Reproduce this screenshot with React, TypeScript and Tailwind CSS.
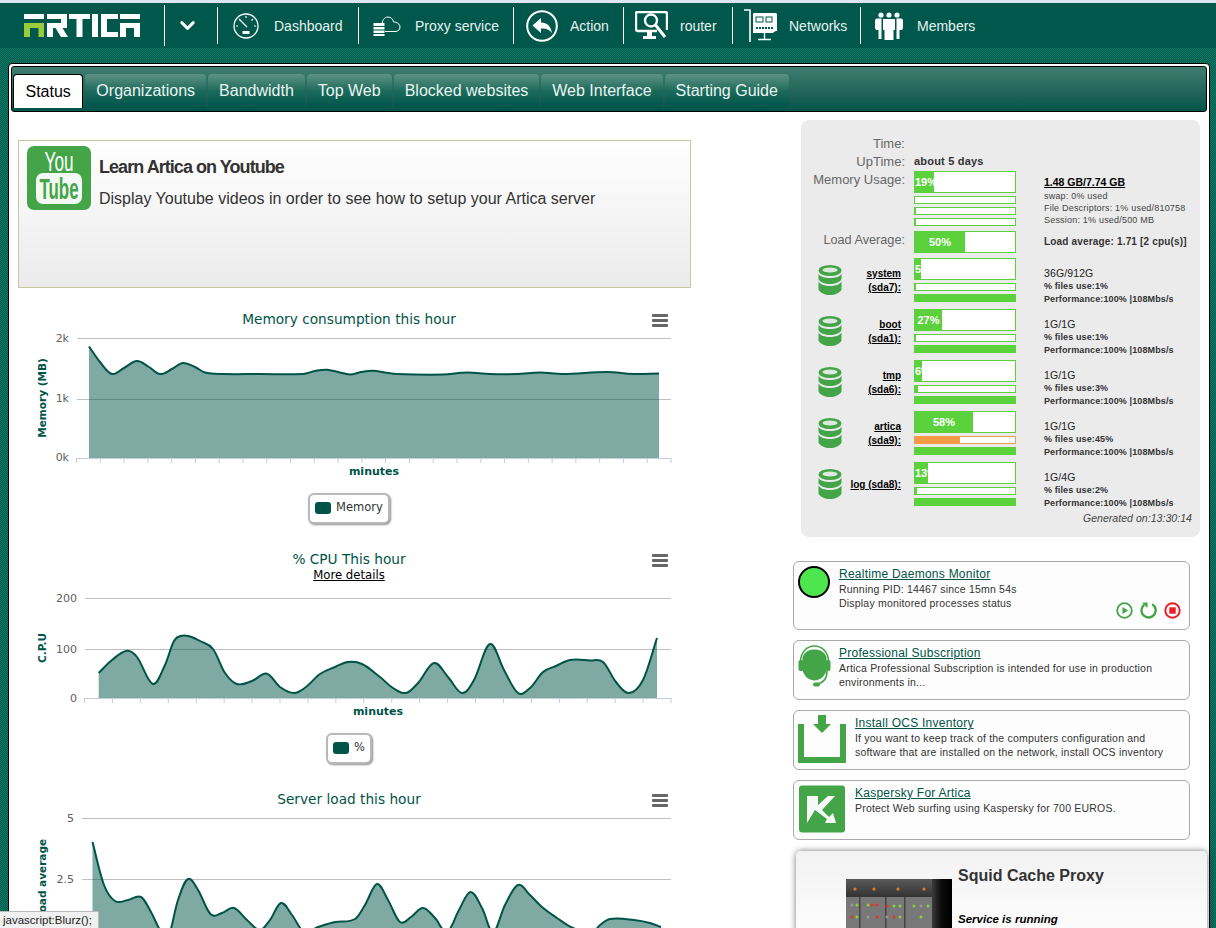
import React from "react";
import { ChevronDown } from "lucide-react";

type P = [number, number];

function spline(pts: P[]): string {
  let d = `M${pts[0][0]} ${pts[0][1]}`;
  for (let i = 0; i < pts.length - 1; i++) {
    const p0 = pts[Math.max(0, i - 1)];
    const p1 = pts[i];
    const p2 = pts[i + 1];
    const p3 = pts[Math.min(pts.length - 1, i + 2)];
    const dx = p2[0] - p1[0];
    const m1 = ((p2[1] - p0[1]) / Math.max(1, p2[0] - p0[0])) * dx * 0.36;
    const m2 = ((p3[1] - p1[1]) / Math.max(1, p3[0] - p1[0])) * dx * 0.36;
    d += ` C${(p1[0] + dx * 0.36).toFixed(1)} ${(p1[1] + m1).toFixed(1)} ${(p2[0] - dx * 0.36).toFixed(1)} ${(p2[1] - m2).toFixed(1)} ${p2[0]} ${p2[1]}`;
  }
  return d;
}

const memPts: P[] = [[89,346.5],[100,362],[112,374],[124,368],[137,361],[149,367],[160,374],[172,369],[183,363],[195,367],[205,372.5],[223,374],[260,374],[303,374],[315,371],[327,369.7],[338,372],[350,374.5],[361,372],[373,370.7],[385,372.5],[397,374],[443,374.5],[467,372.5],[490,374],[517,374],[540,372.5],[563,374],[607,372],[633,374],[659,373.5]];
const cpuPts: P[] = [[98.7,673],[112,660],[127,650.7],[137,657],[153,684],[165,665],[174,641],[182,635.7],[190,636.5],[200,641],[213,649],[225,673],[237,684],[252,681],[267,673.7],[280,687],[294,693],[306,687],[320,674],[335,667],[348,662],[362,664],[380,677],[393,688],[406,693],[418,683],[434,663],[448,677],[462,693],[474,680],[490,644],[504,670],[518,693],[530,688],[543,672],[556,666],[570,660],[590,660.5],[603,662],[616,682],[629,693],[643,680],[657,638]];
const loadPts: P[] = [[92.5,842],[104,885],[115,901],[128,900],[141,897],[151,912],[161,932],[168,938],[178,900],[188,879],[198,890],[210.5,914],[222,913],[234,908],[247,920],[260,930],[270,920],[281,903],[292,915],[304,932],[318,927],[335,922],[355,919],[365,905],[377,884],[388,900],[400,922],[411,917],[423,908],[435,918],[447,932],[459,910],[470.5,892],[482,908],[493,932],[505,905],[518,885],[530,895],[542,907],[557,918],[573,928],[592,933],[600,925],[610,919],[634,920],[650,923],[661,927]];

function Chart({ left, top, height, grids, base, pts, yTitle, yTitleX, yTitleY, labels, ticks, xLabelX, xLabelY }: {
  left: number; top: number; height: number; grids: number[]; base: number; pts: P[]; yTitle: string; yTitleX: number; yTitleY: number;
  labels: [string, number, number][]; ticks?: number[]; xLabelX?: number; xLabelY?: number;
}) {
  const line = spline(pts);
  const area = `${line} L${pts[pts.length - 1][0]} ${base} L${pts[0][0]} ${base} Z`;
  return (
    <svg width={662} height={height} viewBox={`18 ${top} 662 ${height}`} className="block" style={{ fontFamily: "'DejaVu Sans', sans-serif" }}>
      {grids.map((g) => <line key={g} x1={left} x2={671} y1={g + 0.5} y2={g + 0.5} stroke="#c0c0c0" />)}
      {ticks && <line x1={left} x2={671} y1={base + 0.5} y2={base + 0.5} stroke="#c0d0e0" />}
      {ticks && ticks.map((t) => <line key={t} x1={t} x2={t} y1={base} y2={base + 5} stroke="#c0d0e0" />)}
      <path d={area} fill="#005447" fillOpacity={0.5} />
      <path d={line} fill="none" stroke="#005447" strokeWidth={2} />
      {labels.map(([s, x, y]) => <text key={s} x={x} y={y} textAnchor="end" fontSize={11} fill="#606060">{s}</text>)}
      <text transform={`translate(${yTitleX} ${yTitleY}) rotate(-90)`} textAnchor="middle" fontSize={10.5} fontWeight={700} fill="#005447">{yTitle}</text>
      {xLabelX && <text x={xLabelX} y={xLabelY} textAnchor="middle" fontSize={11} fontWeight={700} fill="#005447">minutes</text>}
    </svg>
  );
}

function Burger() {
  return (
    <svg width={18} height={14} viewBox="0 0 18 14" className="absolute right-[11px] top-[4px]">
      <rect x={1} y={0} width={16} height={3} rx={1} fill="#666" />
      <rect x={1} y={5} width={16} height={3} rx={1} fill="#666" />
      <rect x={1} y={10} width={16} height={3} rx={1} fill="#666" />
    </svg>
  );
}

function ChartTitle({ children }: { children: React.ReactNode }) {
  return (
    <div className="relative h-[18px] text-center text-[13.7px] leading-[18px] text-[#005447] font-['DejaVu_Sans',sans-serif]">
      {children}
      <Burger />
    </div>
  );
}

function Legend({ label, w }: { label: string; w: string }) {
  return (
    <div className="flex justify-center h-[31px]">
      <div className={`${w} flex items-center gap-[5px] pl-[5px] pb-px bg-white border-2 border-[#b8b8b8] rounded-[6px] shadow-[1px_1px_2px_rgba(0,0,0,0.45)] text-[11.5px] text-[#333] font-['DejaVu_Sans',sans-serif]`}>
        <span className="w-[16px] h-[12px] rounded-[3px] bg-[#005447]" />
        <span>{label}</span>
      </div>
    </div>
  );
}

function Bar({ pct, h, label, color = "#5bd13c" }: { pct: number; h: string; label?: string; color?: string }) {
  return (
    <div className={`${h} w-[102px] bg-white border overflow-hidden`} style={{ borderColor: color }}>
      <div className="h-full overflow-hidden text-center whitespace-nowrap text-[11px] font-bold leading-[20px] text-white" style={{ width: `${pct}%`, backgroundColor: color }}>
        {label}
      </div>
    </div>
  );
}

function Db() {
  return (
    <svg width={24} height={30} viewBox="0 0 24 30" className="shrink-0">
      <ellipse cx={12} cy={5.5} rx={11.5} ry={5.5} fill="#43a548" />
      <ellipse cx={12} cy={5} rx={7.5} ry={2.5} fill="#dfe8df" />
      <path d="M0.5 8.5C2 12 7 13 12 13S22 12 23.5 8.5V14C22 17.5 17 19 12 19S2 17.5 0.5 14Z" fill="#43a548" />
      <path d="M0.5 16.5C2 19.5 7 21 12 21S22 19.5 23.5 16.5V24.5C22 28 17 30 12 30S2 28 0.5 24.5Z" fill="#43a548" />
    </svg>
  );
}

function Disk({ name, dev, oneLine, pct, label, files, filesPct, size, warn }: { name?: string; dev: string; oneLine?: string; pct: number; label: string; files: string; filesPct: number; size: string; warn?: boolean }) {
  return (
    <div className="flex h-[44px] mb-[7px]">
      <div className="w-[104px] shrink-0 flex items-center pl-[17px]">
        <Db />
        <div className="flex-1 pr-[4px] pt-[2px] text-right text-[10px] font-bold leading-[14px] text-black underline whitespace-nowrap">
          {oneLine ? oneLine : (<><div>{name}</div><div>{dev}</div></>)}
        </div>
      </div>
      <div className="ml-[9px] w-[102px] flex flex-col gap-[3px]">
        <Bar pct={pct} h="h-[22px]" label={label} />
        <Bar pct={filesPct} h="h-[8px]" color={warn ? "#f79c44" : "#5bd13c"} />
        <Bar pct={100} h="h-[8px]" />
      </div>
      <div className="ml-[28px] pt-[8px] text-[9px] text-[#333] font-bold leading-[12px] tracking-[0.12px] whitespace-nowrap">
        <div className="leading-[14px] font-normal text-[10.5px] text-[#222]">{size}</div>
        <div>{files}</div>
        <div className="mt-px">Performance:100% |108Mbs/s</div>
      </div>
    </div>
  );
}

function Card({ h, icon, title, pl, children }: { h: string; icon: React.ReactNode; title: string; pl: string; children: React.ReactNode }) {
  return (
    <div className={`${h} w-[397px] relative flex bg-[#fdfdfd] border border-[#aaaaaa] rounded-[6px] mb-[10px]`}>
      <div className={`${pl} shrink-0 pl-[4px] pt-[4px]`}>{icon}</div>
      <div className="pt-[5px] text-[10.5px] leading-[14px] text-[#333] tracking-[0.2px]">
        <div className="text-[12px] leading-[15px] text-[#005447] underline tracking-[0.25px]">{title}</div>
        {children}
      </div>
    </div>
  );
}

function NavItem({ w, icon, label }: { w: string; icon: React.ReactNode; label: string }) {
  return (
    <div className={`${w} h-full flex items-center relative`}>
      <span className="absolute left-0 top-[4px] bottom-[4px] w-px bg-white" />
      <div className="w-[57px] flex items-center justify-center shrink-0">{icon}</div>
      <span className="mt-[2px] text-[14px] text-[#e8f2ef]">{label}</span>
    </div>
  );
}

function Tab({ label, active }: { label: string; active?: boolean }) {
  return active ? (
    <div className="h-[34px] px-[11.5px] flex items-center bg-white border border-black border-b-0 rounded-t-[4px] text-[16px] text-black">{label}</div>
  ) : (
    <div className="h-[34px] px-[11px] flex items-center rounded-t-[4px] text-[16px] text-[#eaf5f1] bg-gradient-to-b from-[#5c9385] via-[#1a6a5c] to-[#00544a]">{label}</div>
  );
}

export default function App() {
  return (
    <div className="relative w-[1216px] h-[928px] overflow-hidden font-['Liberation_Sans',Arial,sans-serif] bg-[repeating-conic-gradient(#00564a_0_25%,#0a7d67_0_50%)] bg-[length:2px_2px]">
      <div className="h-[3px] bg-[#dbe6f3]" />
      <div className="h-[45px] bg-[#00574b] flex items-center">
        <div className="w-[164px] h-full flex items-center pl-[24px]">
          <svg width={117} height={24} viewBox="0 0 117 24">
            <g fill="#fff">
              <path d="M0 0H20V5H0Z" />
              <path d="M23 0H43V14H38.5L44 23H37L31.5 14H29V23H23V9H37V5H23Z" />
              <path d="M45 0H66V5H58.5V23H52.5V5H45Z" />
              <path d="M68 0H74V23H68Z" />
              <path d="M77 0H94V5H83V18H94V23H77Z" />
              <path d="M96 0H116V5H96Z" />
              <path d="M96 9H116V23H110V14H102V23H96Z" />
            </g>
            <path d="M0 9H20V23H14.5V14H6V23H0Z" fill="#9ccb3b" />
          </svg>
        </div>
        <div className="w-[53px] h-full flex items-center justify-center pr-[7px] relative">
          <span className="absolute left-0 top-[2px] bottom-[2px] w-px bg-white" />
          <ChevronDown size={23} strokeWidth={3} color="#fff" />
        </div>
        <NavItem w="w-[141px]" label="Dashboard" icon={
          <svg width={26} height={26} viewBox="0 0 26 26" fill="none" stroke="#fff">
            <circle cx={13} cy={13} r={12} strokeWidth={1.3} />
            <path d="M13 3V5M6 6L7.5 7.5M20 6L18.5 7.5M3 13H5M23 13H21" strokeWidth={1.2} />
            <path d="M7 7L14 14" strokeWidth={1.3} />
            <rect x={9.5} y={18} width={7} height={3} fill="#fff" stroke="none" />
          </svg>
        } />
        <NavItem w="w-[155px]" label="Proxy service" icon={
          <svg width={28} height={20} viewBox="0 0 28 20" fill="none">
            <path d="M9 9C9 5 11 1 15 1C18 1 20 3 20.5 6C24 6 27 8 27 11C27 14 25 15.5 22 15.5H12" stroke="#fff" strokeWidth={1} />
            <rect x={0.5} y={7} width={11} height={3} fill="#fff" />
            <rect x={0.5} y={11} width={11} height={2.5} fill="#fff" />
            <rect x={0.5} y={14.5} width={11} height={2.5} fill="#fff" />
            <rect x={0.5} y={18} width={11} height={2} fill="#fff" />
          </svg>
        } />
        <NavItem w="w-[110px]" label="Action" icon={
          <svg width={32} height={32} viewBox="0 0 32 32" fill="none">
            <circle cx={16} cy={16} r={14.8} stroke="#fff" strokeWidth={2} />
            <path d="M6.5 15.5L15 8V12.5C21 12.5 25 16.5 26 23C23.5 19.5 20 18 15 18.5V23Z" fill="#fff" />
          </svg>
        } />
        <NavItem w="w-[109px]" label="router" icon={
          <svg width={33} height={30} viewBox="0 0 33 30" fill="none" stroke="#fff">
            <path d="M22 20H3C1.5 20 1 19 1 18V2C1 1 1.5 1 3 1H30C31.5 1 32 1.5 32 3V19" strokeWidth={2.4} />
            <circle cx={16} cy={9.5} r={6} strokeWidth={2.4} />
            <path d="M20.5 14L30 26" strokeWidth={3} />
            <path d="M12 21H17V25H21V28H8V25H12Z" fill="#fff" stroke="none" />
          </svg>
        } />
        <NavItem w="w-[128px]" label="Networks" icon={
          <svg width={33} height={34} viewBox="0 0 33 34">
            <path d="M0 1H6V33" stroke="#fff" strokeWidth={1.6} fill="none" />
            <path d="M9 5C9 4 10 4 11 4H31C32 4 33 4 33 6V22C30 22 30 24 28 24H9Z" fill="#fff" />
            <rect x={12} y={8} width={7} height={5} fill="none" stroke="#00574b" strokeWidth={1} />
            <rect x={22} y={8} width={6} height={5} fill="none" stroke="#00574b" strokeWidth={1} />
            <path d="M12 19H29" stroke="#00574b" strokeWidth={2} strokeDasharray="2 1" />
            <path d="M20.5 24V30M14 30.5H27" stroke="#fff" strokeWidth={1.4} />
          </svg>
        } />
        <NavItem w="w-[356px]" label="Members" icon={
          <svg width={28} height={28} viewBox="0 0 28 28" fill="#fff">
            <circle cx={6} cy={3} r={2.6} />
            <circle cx={14} cy={3} r={2.6} />
            <circle cx={22} cy={3} r={2.6} />
            <path d="M0 9C0 7 1 6.5 3 6.5H6.5V27H3.5V18H1L0 16Z" />
            <path d="M8 7H20V18H18.5V28H9.5V18H8Z" />
            <path d="M28 9C28 7 27 6.5 25 6.5H21.5V27H24.5V18H27L28 16Z" />
          </svg>
        } />
      </div>
      <div className="h-[15px]" />

      <div className="ml-[8px] mr-[6px] h-[900px] bg-white border border-black rounded-t-[4px] pt-[2px] px-px">
        <div className="mx-px h-[46px] border border-black rounded-[3px] bg-gradient-to-b from-[#3f7d70] to-[#00544a] flex items-end gap-[2px] pl-[1px] pb-[3px]">
          <Tab label="Status" active />
          <Tab label="Organizations" />
          <Tab label="Bandwidth" />
          <Tab label="Top Web" />
          <Tab label="Blocked websites" />
          <Tab label="Web Interface" />
          <Tab label="Starting Guide" />
        </div>

        <div className="flex items-start">
          {/* left */}
          <div className="ml-[8px] w-[662px] pt-[28px]">
            <div className="w-[673px] h-[148px] flex border border-[#c8c8a0] bg-gradient-to-b from-white to-[#ebebeb] pl-[8px] pt-[5px]">
              <svg width={64} height={64} viewBox="0 0 64 64" className="shrink-0">
                <rect width={64} height={64} rx={7} fill="#43a548" />
                <text x={32} y={25} textAnchor="middle" fontSize={27} fill="#fff" textLength={29} lengthAdjust="spacingAndGlyphs" fontFamily="Liberation Sans">You</text>
                <rect x={9} y={27} width={46} height={31} rx={7} fill="#f4f8f4" />
                <text x={32} y={53} textAnchor="middle" fontSize={30} fontWeight={700} fill="#43a548" textLength={39} lengthAdjust="spacingAndGlyphs" fontFamily="Liberation Sans">Tube</text>
              </svg>
              <div className="pl-[8px] text-[#333]">
                <div className="pt-[10px] text-[18px] leading-[22px] font-bold tracking-[-0.95px]">Learn Artica on Youtube</div>
                <div className="pt-[11px] text-[16px] leading-[20px]">Display Youtube videos in order to see how to setup your Artica server</div>
              </div>
            </div>

            <div className="h-[22px]" />
            <ChartTitle>Memory consumption this hour</ChartTitle>
            <Chart left={77} top={328} height={152} grids={[338, 399]} base={458} pts={memPts} yTitle="Memory (MB)" yTitleX={46} yTitleY={398}
              labels={[["2k", 69, 342], ["1k", 69, 402], ["0k", 69, 461]]}
              ticks={Array.from({ length: 26 }, (_, i) => 76.5 + i * 23.78)} xLabelX={374} xLabelY={475} />
            <div className="h-[13px]" />
            <Legend label="Memory" w="w-[82px]" />

            <div className="h-[26px]" />
            <ChartTitle>% CPU This hour</ChartTitle>
            <div className="h-[15px] text-center text-[11.7px] leading-[15px] text-black underline font-['DejaVu_Sans',sans-serif]">More details</div>
            <Chart left={85} top={583} height={137} grids={[598, 649]} base={698} pts={cpuPts} yTitle="C.P.U" yTitleX={46} yTitleY={648}
              labels={[["200", 77, 602], ["100", 77, 653], ["0", 77, 702]]}
              ticks={Array.from({ length: 22 }, (_, i) => 84.5 + i * 27.93)} xLabelX={378} xLabelY={715} />
            <div className="h-[13px]" />
            <Legend label="%" w="w-[46px]" />

            <div className="h-[26px]" />
            <ChartTitle>Server load this hour</ChartTitle>
            <Chart left={82} top={808} height={120} grids={[818, 879]} base={1000} pts={loadPts} yTitle="Load average" yTitleX={46} yTitleY={879}
              labels={[["5", 74, 822], ["2.5", 74, 883]]} />
          </div>

          {/* right */}
          <div className="ml-[113px] pt-[8px] w-[411px] shrink-0">
            <div className="ml-[8px] w-[399px] h-[417px] bg-[#ebebeb] rounded-[8px] pt-[15px] text-[#666]">
              <div className="flex h-[18px] items-center"><div className="w-[104px] shrink-0 text-right text-[13px]">Time:</div></div>
              <div className="flex h-[17px] items-center">
                <div className="w-[104px] shrink-0 text-right text-[13px]">UpTime:</div>
                <div className="ml-[9px] text-[11px] font-bold text-[#333] tracking-[0.2px]">about 5 days</div>
              </div>
              <div className="flex mt-[1px]">
                <div className="w-[104px] shrink-0 text-right text-[13px] leading-[17px]">Memory Usage:</div>
                <div className="ml-[9px] flex flex-col gap-[3px]">
                  <Bar pct={19} h="h-[22px]" label="19%" />
                  <Bar pct={0} h="h-[8px]" />
                  <Bar pct={1} h="h-[8px]" />
                  <Bar pct={1} h="h-[8px]" />
                </div>
                <div className="ml-[28px] pt-[4px] text-[9px] leading-[12px] text-[#444] tracking-[0.2px] whitespace-nowrap">
                  <div className="text-[10.5px] leading-[15px] font-bold text-black underline tracking-normal">1.48 GB/7.74 GB</div>
                  <div>swap: 0% used</div>
                  <div>File Descriptors: 1% used/810758</div>
                  <div>Session: 1% used/500 MB</div>
                </div>
              </div>
              <div className="flex mt-[5px] items-center">
                <div className="w-[104px] shrink-0 text-right text-[12.7px] -mt-[2px]">Load Average:</div>
                <div className="ml-[9px]"><Bar pct={50} h="h-[22px]" label="50%" /></div>
                <div className="ml-[28px] -mt-[2px] text-[10px] font-bold text-[#333] tracking-[0.17px] whitespace-nowrap">Load average: 1.71 [2 cpu(s)]</div>
              </div>
              <div className="mt-[5px]">
                <Disk name="system" dev="(sda7):" pct={6} label="5%" size="36G/912G" files="% files use:1%" filesPct={1} />
                <Disk name="boot" dev="(sda1):" pct={27} label="27%" size="1G/1G" files="% files use:1%" filesPct={1} />
                <Disk name="tmp" dev="(sda6):" pct={7} label="6%" size="1G/1G" files="% files use:3%" filesPct={3} />
                <Disk name="artica" dev="(sda9):" pct={58} label="58%" size="1G/1G" files="% files use:45%" filesPct={45} warn />
                <Disk dev="" oneLine="log (sda8):" pct={13} label="13%" size="1G/4G" files="% files use:2%" filesPct={2} />
              </div>
              <div className="pr-[8px] -mt-[2px] text-right text-[10.5px] italic text-[#444] tracking-[0.05px]">Generated on:13:30:14</div>
            </div>

            <div className="mt-[24px]">
              <Card h="h-[69px]" pl="w-[45px]" title="Realtime Daemons Monitor" icon={<div className="w-[32px] h-[32px] rounded-full bg-[#4fe54f] border-2 border-black" />}>
                <div>Running PID: 14467 since 15mn 54s</div>
                <div>Display monitored processes status</div>
                <div className="absolute right-[8px] bottom-[10px] flex gap-[7px]">
                  <svg width={17} height={17} viewBox="0 0 17 17" fill="none"><circle cx={8.5} cy={8.5} r={7.3} stroke="#43a548" strokeWidth={1.8} /><path d="M6.5 5L12 8.5L6.5 12Z" fill="#43a548" /></svg>
                  <svg width={17} height={17} viewBox="0 0 17 17" fill="none"><path d="M4.2 2.8A7.1 7.1 0 1 0 12.2 2.3" stroke="#43a548" strokeWidth={2.4} /><path d="M2 0.5H7.5V6Z" fill="#43a548" /></svg>
                  <svg width={17} height={17} viewBox="0 0 17 17" fill="none"><circle cx={8.5} cy={8.5} r={7.2} stroke="#ee1c25" strokeWidth={2} /><rect x={5.3} y={5.3} width={6.4} height={6.4} fill="#ee1c25" /></svg>
                </div>
              </Card>
              <Card h="h-[60px]" pl="w-[45px]" title="Professional Subscription" icon={
                <svg width={33} height={42} viewBox="0 0 33 42" fill="#43a548">
                  <path d="M2.5 17C2.5 7 9 1 16.5 1S30.5 7 30.5 17" fill="none" stroke="#43a548" strokeWidth={1.6} />
                  <path d="M4.5 12C7 6 12 4.5 16.5 4.5S26 6 28.5 12V25C27 32 21 35.5 16.5 35.5S6 32 4.5 25Z" />
                  <rect x={0.5} y={15} width={5} height={11} rx={2} />
                  <rect x={27.5} y={15} width={5} height={11} rx={2} />
                  <path d="M29 26C29 34 25 38 19 39" fill="none" stroke="#43a548" strokeWidth={1.6} />
                  <rect x={15} y={37.5} width={7} height={4} rx={2} />
                </svg>
              }>
                <div>Artica Professional Subscription is intended for use in production</div>
                <div>environments in...</div>
              </Card>
              <Card h="h-[60px]" pl="w-[61px]" title="Install OCS Inventory" icon={
                <svg width={48} height={48} viewBox="0 0 48 48" fill="#43a548">
                  <path d="M0 9H6V42H42V9H48V48H0Z" />
                  <path d="M20 0H28V9H33L24 18L15 9H20Z" />
                </svg>
              }>
                <div>If you want to keep track of the computers configuration and</div>
                <div>software that are installed on the network, install OCS inventory</div>
              </Card>
              <Card h="h-[60px]" pl="w-[61px]" title="Kaspersky For Artica" icon={
                <svg width={48} height={48} viewBox="0 0 48 48">
                  <rect x={1} y={0.5} width={46} height={47} rx={3} fill="#43a548" />
                  <path d="M9 11H20V20L30 11H37L24 25L31 32L35 28L38 38H27L29 34L17 25L9 38Z" fill="#f6f9f6" />
                </svg>
              }>
                <div>Protect Web surfing using Kaspersky for 700 EUROS.</div>
              </Card>
              <div className="ml-[3px] mt-[11px] w-[411px] h-[100px] rounded-t-[5px] bg-gradient-to-b from-[#f2f2f2] to-white shadow-[0_0_6px_rgba(0,0,0,0.55)] flex pl-[50px] pt-[28px]">
                <svg width={106} height={60} viewBox="0 0 106 60" className="shrink-0">
                  <defs>
                    <linearGradient id="rackSide" x1="0" x2="1" y1="0" y2="0">
                      <stop offset="0" stopColor="#3a3a3a" />
                      <stop offset="0.5" stopColor="#0a0a0a" />
                      <stop offset="1" stopColor="#000" />
                    </linearGradient>
                    <linearGradient id="rackTop" x1="0" x2="0" y1="0" y2="1">
                      <stop offset="0" stopColor="#5a5a5a" />
                      <stop offset="1" stopColor="#333" />
                    </linearGradient>
                  </defs>
                  <rect width={106} height={60} fill="#3a3a3a" />
                  <rect width={88} height={18} fill="url(#rackTop)" />
                  <rect y={18} width={88} height={42} fill="#787878" />
                  <rect x={86} width={20} height={60} fill="url(#rackSide)" />
                  {[9, 28, 52, 78].map((x) => <circle key={x} cx={x} cy={10} r={1.6} fill="#e77a1e" />)}
                  {[13, 39, 58].map((x) => <rect key={x} x={x} y={18} width={1.5} height={42} fill="#444" />)}
                  {[[6, 26, "#999"], [11, 26, "#8bd13a"], [22, 26, "#8bd13a"], [26, 26, "#d33"], [31, 26, "#d33"], [41, 27, "#d33"], [48, 27, "#8bd13a"], [54, 27, "#8bd13a"], [68, 27, "#8bd13a"], [75, 27, "#999"], [82, 27, "#8bd13a"], [6, 38, "#d33"], [11, 38, "#8bd13a"], [22, 38, "#999"], [31, 38, "#d33"], [41, 38, "#999"], [48, 38, "#d33"], [54, 38, "#8bd13a"], [75, 38, "#8bd13a"]].map(([x, y, c], i) => (
                    <circle key={i} cx={x as number} cy={y as number} r={1.5} fill={c as string} />
                  ))}
                </svg>
                <div className="pl-[6px] -mt-[13px]">
                  <div className="text-[16px] leading-[20px] font-bold text-[#333]">Squid Cache Proxy</div>
                  <div className="pt-[26px] text-[11.5px] leading-[14px] font-bold italic text-black">Service is running</div>
                </div>
              </div>
            </div>
          </div>
        </div>
      </div>

      <div className="absolute left-0 bottom-0 w-[99px] h-[17px] bg-[#f0f0f0] border-t border-r border-[#bbb] rounded-tr-[2px] pl-[3px] text-[11.5px] leading-[16px] text-[#222]">javascript:Blurz();</div>
    </div>
  );
}
